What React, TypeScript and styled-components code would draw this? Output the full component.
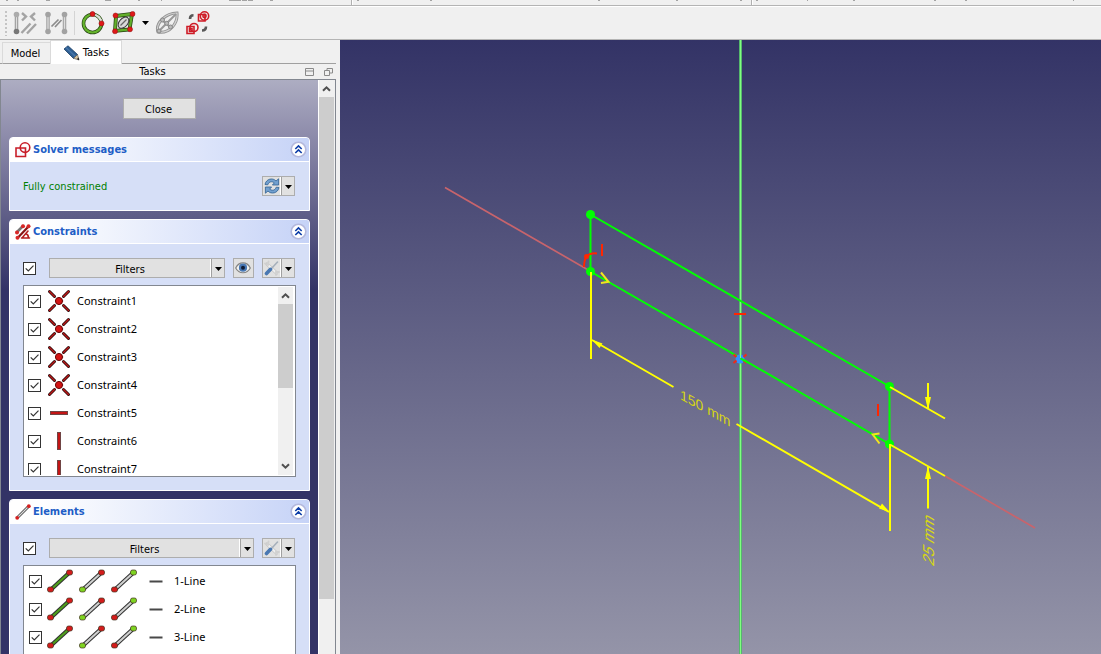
import React from 'react';
import styled, { createGlobalStyle } from 'styled-components';

const GlobalStyle = createGlobalStyle`
  *, *::before, *::after { box-sizing: border-box; }
  body { margin: 0; background: #f0f0f0; }
  body, button, input { font-family: "DejaVu Sans Condensed", "Noto Sans", sans-serif; font-size: 11px; line-height: 14px; color: #000; }
  svg { display: block; flex: none; }
`;

const Window = styled.div`
  display: flex;
  flex-direction: column;
  height: 100vh;
  overflow: hidden;
  background: #f0f0f0;
`;

const UpperBar = styled.div`
  height: 6px;
  flex: none;
  overflow: hidden;
  border-bottom: 1px solid #b4b4b4;
`;

const Toolbar = styled.div`
  display: flex;
  align-items: center;
  flex: none;
  height: 34px;
  padding-left: 5px;
  border-top: 1px solid #fff;
  border-bottom: 1px solid #b4b4b4;
`;

const Handle = styled.span`
  width: 2px;
  height: 25px;
  margin-right: 5px;
  background: repeating-linear-gradient(to bottom, #c4c4c4 0 2px, transparent 2px 4px);
`;

const ToolButton = styled.button`
  display: flex;
  align-items: center;
  justify-content: center;
  width: 26px;
  height: 26px;
  margin-right: 5px;
  padding: 0;
  border: 0;
  background: transparent;
`;

const MenuArrowButton = styled(ToolButton)`
  width: 12px;
  margin: 0 3px 0 -3px;
`;

const Separator = styled.span`
  width: 1px;
  height: 24px;
  margin-right: 5px;
  background: #d4d4d4;
`;

const Main = styled.main`
  display: flex;
  flex: 1;
  min-height: 0;
`;

const Dock = styled.aside`
  display: flex;
  flex-direction: column;
  flex: none;
  width: 336px;
  margin-right: 4px;
`;

const Tabs = styled.div`
  display: flex;
  align-items: flex-end;
  flex: none;
  height: 24px;
  padding-left: 2px;
  background: linear-gradient(#a0a0a0, #a0a0a0) bottom / 100% 1px no-repeat;
`;

const Tab = styled.button<{ $active?: boolean }>`
  display: flex;
  align-items: center;
  justify-content: center;
  gap: 3px;
  width: ${p => (p.$active ? 72 : 48)}px;
  height: ${p => (p.$active ? 24 : 22)}px;
  padding: ${p => (p.$active ? '1px 0 0' : '2px 2px 0 0')};
  border: 1px solid #dadada;
  border-bottom: ${p => (p.$active ? '0' : '1px solid #a0a0a0')};
  border-right-width: ${p => (p.$active ? 1 : 0)}px;
  background: ${p => (p.$active ? '#fff' : '#f0f0f0')};
`;

const DockTitle = styled.div`
  display: grid;
  grid-template-columns: 1fr auto auto;
  align-items: center;
  gap: 10px;
  flex: none;
  height: 15px;
  padding-right: 3px;
`;

const DockName = styled.span`
  padding: 1px 0 0 10px;
  text-align: center;
`;

const TitleButton = styled.button`
  padding: 0;
  border: 0;
  background: transparent;
`;

const ScrollArea = styled.div`
  display: flex;
  flex: 1;
  min-height: 0;
  overflow: hidden;
  border: 1px solid #828790;
  border-bottom: 0;
`;

const TaskPanel = styled.div`
  display: flex;
  flex-direction: column;
  gap: 8px;
  flex: 1;
  padding: 18px 8px 0;
  background: linear-gradient(#adadc2 0, #8b89a9 60px, #333366 210px);
`;

const CloseButton = styled.button`
  align-self: center;
  flex: none;
  width: 73px;
  height: 21px;
  margin-bottom: 10px;
  padding: 2px 2px 0 0;
  border: 1px solid #adadad;
  background: #e1e1e1;
`;

const TaskBox = styled.section`
  flex: none;
  border: 1px solid #fff;
  border-radius: 4px 4px 0 0;
  background: #d6dff7;
  overflow: hidden;
`;

const TaskHeader = styled.header`
  display: flex;
  align-items: center;
  gap: 2px;
  height: 24px;
  padding: 0 2px 0 5px;
  border-bottom: 1px solid #fff;
  background: linear-gradient(to right, #fff 10%, #c6d3f7);
`;

const TaskTitle = styled.h2`
  flex: 1;
  margin: 0;
  padding-top: 1px;
  font-size: 11px;
  line-height: 14px;
  font-weight: bold;
  color: #215dc6;
`;

const FoldButton = styled.button`
  width: 17px;
  height: 17px;
  padding: 0;
  border: 0;
  background: transparent;
`;

const TaskBody = styled.div<{ $bottom?: number }>`
  padding: 14px 13px ${p => p.$bottom ?? 13}px;
`;

const ControlRow = styled.div`
  display: flex;
  align-items: center;
  gap: 8px;
  height: 20px;
  padding-right: 1px;
`;

const Status = styled.p`
  flex: 1;
  margin: 0;
  padding-top: 2px;
  color: #008000;
`;

const CheckCell = styled.span<{ $gap?: number }>`
  display: grid;
  flex: none;
  width: 13px;
  height: 13px;
  margin-right: ${p => p.$gap ?? 0}px;
  > * { grid-area: 1 / 1; pointer-events: none; }
`;

const CheckInput = styled.input`
  appearance: none;
  width: 13px;
  height: 13px;
  margin: 0;
  border: 1px solid #333;
  background: #fff;
  && { pointer-events: auto; }
  &:not(:checked) + svg { visibility: hidden; }
`;

const SplitBox = styled.span<{ $grow?: boolean }>`
  display: flex;
  flex: ${p => (p.$grow ? '1' : 'none')};
  height: 20px;
  border: 1px solid #adadad;
  background: #e1e1e1;
`;

const SplitMain = styled.button<{ $text?: boolean }>`
  display: flex;
  align-items: center;
  justify-content: center;
  flex: 1;
  min-width: 18px;
  padding: ${p => (p.$text ? '3px 0 0' : '0')};
  border: 0;
  border-right: 1px solid #fff;
  background: transparent;
`;

const SplitArrow = styled.button`
  display: flex;
  align-items: center;
  justify-content: center;
  width: 13px;
  padding: 2px 0 0;
  border: 0;
  border-left: 1px solid #a0a0a0;
  background: transparent;
`;

const IconButton = styled.button`
  display: flex;
  align-items: center;
  justify-content: center;
  width: 21px;
  height: 20px;
  padding: 0 1px 0 0;
  border: 1px solid #adadad;
  background: #e1e1e1;
`;

const ListFrame = styled.div`
  display: flex;
  height: 192px;
  margin-top: 7px;
  padding: 1px;
  border: 1px solid #828790;
  background: #fff;
`;

const List = styled.ul<{ $indent: number }>`
  flex: 1;
  margin: 0;
  padding: 0 0 0 ${p => p.$indent}px;
  overflow: hidden;
  list-style: none;
`;

const ListRow = styled.li`
  height: 28px;
`;

const RowLabel = styled.label`
  display: flex;
  align-items: center;
  height: 28px;
  font-family: "Noto Sans", "Open Sans", sans-serif;
  font-size: 11px;
  line-height: 14px;
`;

const IconSet = styled.span<{ $gap: number }>`
  display: flex;
  align-items: center;
  gap: 6px;
  margin-right: ${p => p.$gap}px;
`;

const ScrollTrack = styled.div<{ $outer?: boolean }>`
  display: flex;
  flex-direction: column;
  flex: none;
  width: ${p => (p.$outer ? 17 : 16)}px;
  border-left: ${p => (p.$outer ? '1px solid #fff' : '0')};
  border-right: 1px solid ${p => (p.$outer ? '#f0f0f0' : '#fff')};
  background: #f0f0f0;
`;

const ScrollStep = styled.button`
  display: flex;
  align-items: center;
  justify-content: center;
  flex: none;
  width: 15px;
  height: 17px;
  padding: 0;
  border: 0;
  background: transparent;
`;

const ScrollThumb = styled.div<{ $share: number }>`
  flex: ${p => p.$share} 1 0;
  background: #cdcdcd;
`;

const ScrollRest = styled.div<{ $share: number }>`
  flex: ${p => p.$share} 1 0;
`;

const Viewport = styled.div`
  flex: 1;
  min-width: 0;
  background: linear-gradient(#333366, #9494a8);
  > svg { width: 100%; height: 100%; }
`;

const DownTriangle = () => (
  <svg width="7" height="4" viewBox="0 0 7 4"><path d="M0 0H7L3.5 4Z" fill="#000" /></svg>
);

const Chevron = ({ down }: { down?: boolean }) => (
  <svg width="9" height="7" viewBox="0 0 9 7">
    <path d={down ? 'M1 1.2L4.5 4.7L8 1.2' : 'M1 5.8L4.5 2.3L8 5.8'} fill="none" stroke="#505050" strokeWidth="2" />
  </svg>
);

const Check = ({ label, gap }: { label?: string; gap?: number }) => (
  <CheckCell $gap={gap}>
    <CheckInput type="checkbox" defaultChecked aria-label={label} />
    <svg width="13" height="13" viewBox="0 0 13 13">
      <path d="M2.7 6.3L5.3 9L10.5 3.6" fill="none" stroke="#333" strokeWidth="1.2" />
    </svg>
  </CheckCell>
);

const Fold = ({ name }: { name: string }) => (
  <FoldButton aria-label={`Collapse ${name}`}>
    <svg width="17" height="17" viewBox="0 0 17 17">
      <circle cx="8.5" cy="8.5" r="7.3" fill="#fff" stroke="#b3b8dc" strokeWidth="1.6" />
      <path d="M5.3 8L8.5 4.9L11.7 8M5.3 12L8.5 8.9L11.7 12" fill="none" stroke="#0d3ea8" strokeWidth="1.6" />
    </svg>
  </FoldButton>
);

const SketchIcon = () => (
  <svg width="16" height="16" viewBox="0 0 16 16" fill="none" stroke="#c81e28" strokeWidth="1.6">
    <path d="M1 6H10.5V14.5H1Z" fill="#f8f8ff" /><circle cx="10" cy="5.6" r="4.8" />
  </svg>
);

const ConstraintsIcon = () => (
  <svg width="16" height="16" viewBox="0 0 16 16" fill="none" strokeLinecap="round">
    <path d="M2 8L8 2" stroke="#777" strokeWidth="2.6" />
    <path d="M3 13.5L14 2" stroke="#881414" strokeWidth="2.2" />
    <path d="M6.5 14H14.5M7 14L13 7M11 9.5C13 10.5 13.5 12 13.5 14" stroke="#b51c1c" strokeWidth="1.6" />
    <g fill="#d82828"><circle cx="2" cy="8.5" r="2" /><circle cx="8" cy="2.3" r="2" /><circle cx="2.5" cy="13.8" r="2" /><circle cx="13.5" cy="2.3" r="2" /></g>
  </svg>
);

const LineIcon = () => (
  <svg width="16" height="16" viewBox="0 0 16 16">
    <path d="M2.5 13.5L13.5 2.5" stroke="#444" strokeWidth="2.8" /><path d="M2.5 13.5L13.5 2.5" stroke="#ddd" strokeWidth="1.2" />
    <circle cx="2.2" cy="13.8" r="1.9" fill="#d42020" /><circle cx="13.8" cy="2.2" r="1.9" fill="#d42020" />
  </svg>
);

const RefreshIcon = () => (
  <svg width="16" height="16" viewBox="0 0 16 16" strokeLinejoin="round">
    <g fill="#72a0cf" stroke="#2f5f92" strokeWidth="0.8">
      <path d="M1 6.5C2 .6 9 -.6 12 3L14.6 .8V7H8.4L10.3 4.9C8 3 5 3.4 3.8 6.8Z" />
      <path d="M15 9.5C14 15.4 7 16.6 4 13L1.4 15.2V9H7.6L5.7 11.1C8 13 11 12.6 12.2 9.2Z" />
    </g>
  </svg>
);

const EyeIcon = () => (
  <svg width="16" height="14" viewBox="0 0 16 14">
    <path d="M.7 7C4 .2 12 .2 15.3 7C12 13.3 4 13.3 .7 7Z" fill="#f4f4f0" stroke="#848484" strokeWidth="1.2" />
    <circle cx="8" cy="6.7" r="4.1" fill="#4878b4" /><circle cx="8" cy="6.7" r="2" fill="#101c34" />
  </svg>
);

const ToolsIcon = () => (
  <svg width="16" height="16" viewBox="0 0 16 16" strokeLinecap="round">
    <path d="M3 4L12.5 13" stroke="#c4c4c4" strokeWidth="3.4" />
    <path d="M3.5 4.5L12.5 13" stroke="#f0f0f0" strokeWidth="2" />
    <path d="M1 3.5L4 5L4.5 1.5M15 12L12 12L12 15" fill="none" stroke="#d0d0d0" strokeWidth="1.8" />
    <path d="M7 9L13.5 2" stroke="#a6b0bb" strokeWidth="1.6" />
    <path d="M2.5 13.5L6.5 9.3" stroke="#4a78b2" strokeWidth="3.6" />
  </svg>
);

const Coincident = () => (
  <svg width="24" height="24" viewBox="0 0 24 24" strokeLinecap="round">
    {['M2.5 2.5L7.5 7.5', 'M21.5 2.5L16.5 7.5', 'M2.5 21.5L7.5 16.5', 'M21.5 21.5L16.5 16.5'].map(d => (
      <g key={d}><path d={d} stroke="#280909" strokeWidth="3" /><path d={d} stroke="#bd1919" strokeWidth="1.4" /></g>
    ))}
    <circle cx="12" cy="12" r="3.6" fill="#d41414" stroke="#680808" strokeWidth="1" />
  </svg>
);

const BarIcon = ({ vertical }: { vertical?: boolean }) => (
  <svg width="24" height="24" viewBox="0 0 24 24">
    <g transform={vertical ? 'rotate(90 12 12)' : undefined}>
      <rect x="3" y="10" width="18" height="4" fill="#704444" /><rect x="4" y="11" width="16" height="2" fill="#c41515" />
    </g>
  </svg>
);

const Segment = ({ start, mid, end }: { start: string; mid: string; end: string }) => (
  <svg width="26" height="24" viewBox="0 0 26 24">
    <path d="M4 20.5L22 4" stroke="#303030" strokeWidth="4.2" /><path d="M4 20.5L22 4" stroke={mid} strokeWidth="2.2" />
    <rect x=".5" y="18" width="6" height="5" rx="2" fill={start} stroke="#40301c" strokeWidth=".7" />
    <rect x="19.5" y="1" width="6" height="5" rx="2" fill={end} stroke="#40301c" strokeWidth=".7" />
  </svg>
);

const DashIcon = () => (
  <svg width="14" height="24" viewBox="0 0 14 24"><rect x=".5" y="11.5" width="13" height="2" fill="#484848" /></svg>
);

const PencilIcon = () => (
  <svg width="17" height="17" viewBox="0 0 17 17">
    <path d="M1 4L5 .8L14.5 9.5L10.5 13.5Z" fill="#2e5f93" stroke="#1a3d63" strokeWidth=".8" />
    <path d="M3 2.5L12.5 11.5" stroke="#4a78ab" strokeWidth="1.2" />
    <path d="M10.5 13.3L14.5 9.5L16 15Z" fill="#d9c5a0" stroke="#444" strokeWidth=".6" /><path d="M14 14L15.5 12.5L16.2 15.2Z" fill="#111" />
  </svg>
);

const SnapIcon = () => (
  <svg width="24" height="24" viewBox="0 0 24 24" fill="none">
    <path d="M3.5 3V21" stroke="#999" strokeWidth="3.5" /><path d="M3.5 3V21" stroke="#ddd" strokeWidth="1.3" />
    <circle cx="3.5" cy="3.5" r="2.8" fill="#ababab" /><circle cx="3.5" cy="20.5" r="2.8" fill="#777" />
    <path d="M9 2L13 5.5L9 9.5M22 2L18 5.5L22 9.5M8.5 22L17.5 12.5M14 22.5L23 13" stroke="#a4a4a4" strokeWidth="2.4" />
  </svg>
);

const MirrorIcon = () => (
  <svg width="24" height="24" viewBox="0 0 24 24">
    <path d="M4 3V21M20.5 3V21" stroke="#a1a1a1" strokeWidth="3.5" /><path d="M4 3V21M20.5 3V21" stroke="#ddd" strokeWidth="1.3" />
    <g fill="#a2a2a2"><circle cx="4" cy="3.5" r="2.8" /><circle cx="4" cy="20.5" r="2.8" /><circle cx="20.5" cy="3.5" r="2.8" /><circle cx="20.5" cy="20.5" r="2.8" /></g>
    <path d="M7.5 15.5L14.5 8.5M11 16L17.5 9" stroke="#8c8c8c" strokeWidth="1.7" />
  </svg>
);

const CircleIcon = () => (
  <svg width="24" height="24" viewBox="0 0 24 24" fill="none">
    <circle cx="11.5" cy="12.5" r="9" stroke="#2a4a16" strokeWidth="3.6" /><circle cx="11.5" cy="12.5" r="9" stroke="#65b42c" strokeWidth="2.2" />
    <path d="M11.5 3.5A9 9 0 0 1 20.5 12.5" stroke="#ddd" strokeWidth="2.2" />
    <circle cx="11.5" cy="3" r="2.5" fill="#e01818" stroke="#901010" strokeWidth=".6" /><circle cx="20.5" cy="12.4" r="2.5" fill="#e01818" stroke="#901010" strokeWidth=".6" />
  </svg>
);

const PolygonIcon = () => (
  <svg width="24" height="24" viewBox="0 0 24 24" fill="none">
    <path d="M4 5L20 3L17.500 18.500L3 20Z" stroke="#23400f" strokeWidth="3.8" /><path d="M4 5L20 3L17.500 18.500L3 20Z" stroke="#62ae2b" strokeWidth="2.400" />
    <ellipse cx="11.500" cy="11.700" rx="6.500" ry="4.200" transform="rotate(-48 11.500 11.700)" fill="#d8d8d8" stroke="#333" strokeWidth="1" />
    <path d="M8.500 14.500L14.500 8.500" stroke="#666" strokeWidth="1.200" />
    <g fill="#df1919" stroke="#901010" strokeWidth=".5"><circle cx="3.500" cy="4.500" r="2.500" /><circle cx="20.500" cy="2.900" r="2.500" /><circle cx="18" cy="18.300" r="2.500" /><circle cx="3" cy="20.300" r="2.500" /></g>
  </svg>
);

const EllipseIcon = () => (
  <svg width="24" height="24" viewBox="0 0 24 24" fill="none">
    <path d="M3 21C0 12 11 2 22 2C23 12 15 23 3 21Z" stroke="#949494" strokeWidth="3" /><path d="M3 21C0 12 11 2 22 2C23 12 15 23 3 21Z" stroke="#d4d4d4" strokeWidth="1.2" />
    <path d="M4 20L21 3M7 9L15 16" stroke="#999" strokeWidth="2" />
    <g fill="#bbb" stroke="#888" strokeWidth="1"><circle cx="7.5" cy="9" r="2" /><circle cx="15.5" cy="16" r="2" /><circle cx="11.7" cy="12.3" r="2" /><circle cx="4" cy="20" r="2" /></g>
  </svg>
);

const CloneIcon = () => (
  <svg width="26" height="24" viewBox="0 0 26 24" fill="none">
    <path d="M5 8C5 5.500 6 4.300 8.500 4.300M21 15.500C21 18 19.500 19.500 17 19.500" stroke="#585858" strokeWidth="2.600" />
    <g stroke="#cf1c27" strokeWidth="1.6"><path d="M13.500 3.500H20V10H13.500Z" /><circle cx="19.500" cy="5" r="4.200" /><circle cx="19.500" cy="5" r="1.600" /><path d="M2 15.500H9V22.500H2Z" /><path d="M4.500 17.500H7V20.500H4.500Z" /><circle cx="9" cy="16.500" r="4" /></g>
  </svg>
);

const Split = ({ name, text, children }: { name: string; text?: boolean; children: React.ReactNode }) => (
  <SplitBox $grow={text}>
    <SplitMain $text={text} aria-label={name}>{children}</SplitMain>
    <SplitArrow aria-label={`${name} menu`}><DownTriangle /></SplitArrow>
  </SplitBox>
);

const Task = ({ title, icon, bottom, children }: { title: string; icon: React.ReactNode; bottom?: number; children: React.ReactNode }) => (
  <TaskBox>
    <TaskHeader>{icon}<TaskTitle>{title}</TaskTitle><Fold name={title} /></TaskHeader>
    <TaskBody $bottom={bottom}>{children}</TaskBody>
  </TaskBox>
);

const constraints = ['point', 'point', 'point', 'point', 'horizontal', 'vertical', 'vertical'];
const elements = ['1-Line', '2-Line', '3-Line'];
const RED = '#d31c1c';
const LIME = '#7ed321';
const GREY = '#cfd0cf';

const upperMarks = [
  [6, 2], [17, 2], [46, 4], [105, 6], [138, 2], [161, 1], [229, 12], [242, 5], [248, 5], [270, 3], [357, 2], [430, 2],
  [598, 2], [676, 2], [740, 2], [756, 2], [807, 1], [853, 2], [934, 2], [965, 2], [1073, 1],
];

const Scene = () => (
  <svg viewBox="340 40 761 614" preserveAspectRatio="xMidYMid slice" fill="none" role="img" aria-label="Sketch">
    <path d="M740.5 0V700" stroke="#55b86c" strokeWidth="3" />
    <path d="M740.5 0V700" stroke="#80ff80" strokeWidth="1" />
    <path d="M445 187.5L590 271M945 476L1035 528" stroke="#c8646c" strokeWidth="1.7" />
    <path d="M590.5 214.5L889.5 386.5V444L590.5 271.5Z" stroke="#00ff00" strokeWidth="2" />
    <g fill="#00ff00"><circle cx="590.5" cy="214.5" r="4.5" /><circle cx="590.5" cy="271.5" r="4.5" /><circle cx="889.5" cy="386.5" r="4.5" /><circle cx="889.5" cy="444" r="4.5" /></g>
    <g stroke="#ffff00" strokeWidth="2">
      <path d="M591 272V359M890 444V531" />
      <path d="M592 340L673.5 387M736.5 424L889 512" />
      <path d="M890 387L945 418.5M890 444.5L945 476" />
      <path d="M928 383V408M928 467V508.5" />
      <path d="M601 272.5L608.5 281.8L601 283M879.5 443.5L872.7 434.5L879.5 433.5" stroke="#f3e61c" />
    </g>
    <g fill="#ffff00">
      <path d="M591.5 339.5L602.5 343.5L599.5 348Z" /><path d="M889.5 512L882 503.5L879 508.5Z" />
      <path d="M928 410L925 397H931Z" /><path d="M928 466L925 479H931Z" />
    </g>
    <g stroke="#ff2600" strokeWidth="2">
      <path d="M602 244V256M878 404V416M734 314H746" />
      <path d="M597 253.5C588 252.5 584 257 584 267" /><circle cx="586.5" cy="256.5" r="1.5" />
    </g>
    <circle cx="740" cy="359" r="4.5" fill="#3291ff" />
    <path d="M733.5 354.5L736.5 357M746.5 354.5L743.5 357M733.5 363L736.5 360.5M746.5 363L743.5 360.5" stroke="#f02a18" strokeWidth="2.2" />
    <path d="M740.5 358.3L748 362.6" stroke="#00ff00" strokeWidth="2" />
    <path d="M740.5 350V358" stroke="#80ff80" strokeWidth="1" />
    <g fill="#d6d614" fontFamily="'Liberation Sans', sans-serif">
      <text transform="translate(680 399) skewY(29)" fontSize="14">150 mm</text>
      <text transform="matrix(0 -1 1 .58 934 567)" fontSize="16">25 mm</text>
    </g>
  </svg>
);

export default function App() {
  return (
    <>
      <GlobalStyle />
      <Window>
        <UpperBar>
          <svg width="1101" height="5" viewBox="0 0 1101 5">
            {upperMarks.map(([x, w]) => <rect key={x} x={x} y="0" width={w} height="1" fill="#a3a3a3" />)}
            <path d="M351.5 0V5M751.5 0V5" stroke="#b0b0b0" />
            <path d="M352.5 0V5M752.5 0V5" stroke="#fff" />
          </svg>
        </UpperBar>
        <Toolbar role="toolbar">
          <Handle />
          <ToolButton aria-label="Close shape"><SnapIcon /></ToolButton>
          <ToolButton aria-label="Connect edges"><MirrorIcon /></ToolButton>
          <Separator />
          <ToolButton aria-label="Select constraints"><CircleIcon /></ToolButton>
          <ToolButton aria-label="Select elements"><PolygonIcon /></ToolButton>
          <MenuArrowButton aria-label="More selection tools"><DownTriangle /></MenuArrowButton>
          <ToolButton aria-label="Internal geometry"><EllipseIcon /></ToolButton>
          <ToolButton aria-label="Clone"><CloneIcon /></ToolButton>
        </Toolbar>
        <Main>
          <Dock>
            <Tabs role="tablist">
              <Tab role="tab" aria-selected={false}>Model</Tab>
              <Tab role="tab" aria-selected $active><PencilIcon />Tasks</Tab>
            </Tabs>
            <DockTitle>
              <DockName>Tasks</DockName>
              <TitleButton aria-label="Dock">
                <svg width="9" height="9" viewBox="0 0 9 9" fill="none" stroke="#8a8a8a"><path d="M.5 1.5H8.5V8.5H.5ZM.5 4H8.5" /></svg>
              </TitleButton>
              <TitleButton aria-label="Float">
                <svg width="9" height="9" viewBox="0 0 9 9" fill="none" stroke="#8a8a8a"><path d="M.5 3.5H5.5V8.5H.5ZM3 3.5V1.5H8.5V6H5.5" /></svg>
              </TitleButton>
            </DockTitle>
            <ScrollArea>
              <TaskPanel>
                <CloseButton>Close</CloseButton>
                <Task title="Solver messages" icon={<SketchIcon />} bottom={14}>
                  <ControlRow>
                    <Status>Fully constrained</Status>
                    <Split name="Update"><RefreshIcon /></Split>
                  </ControlRow>
                </Task>
                <Task title="Constraints" icon={<ConstraintsIcon />}>
                  <ControlRow>
                    <Check label="Filter constraints" gap={5} />
                    <Split name="Filters" text>Filters</Split>
                    <IconButton aria-label="Show constraints"><EyeIcon /></IconButton>
                    <Split name="Settings"><ToolsIcon /></Split>
                  </ControlRow>
                  <ListFrame>
                    <List $indent={3}>
                      {constraints.map((kind, i) => (
                        <ListRow key={i}>
                          <RowLabel>
                            <Check gap={6} />
                            <IconSet $gap={6}>{kind === 'point' ? <Coincident /> : <BarIcon vertical={kind === 'vertical'} />}</IconSet>
                            {`Constraint${i + 1}`}
                          </RowLabel>
                        </ListRow>
                      ))}
                    </List>
                    <ScrollTrack>
                      <ScrollStep aria-label="Scroll up"><Chevron /></ScrollStep>
                      <ScrollThumb $share={84} />
                      <ScrollRest $share={70} />
                      <ScrollStep aria-label="Scroll down"><Chevron down /></ScrollStep>
                    </ScrollTrack>
                  </ListFrame>
                </Task>
                <Task title="Elements" icon={<LineIcon />}>
                  <ControlRow>
                    <Check label="Filter elements" gap={5} />
                    <Split name="Filters" text>Filters</Split>
                    <Split name="Settings"><ToolsIcon /></Split>
                  </ControlRow>
                  <ListFrame>
                    <List $indent={4}>
                      {elements.map(name => (
                        <ListRow key={name}>
                          <RowLabel>
                            <Check gap={5} />
                            <IconSet $gap={12}>
                              <Segment start={RED} mid="#4f9e1c" end={RED} />
                              <Segment start={LIME} mid={GREY} end={RED} />
                              <Segment start={RED} mid={GREY} end={LIME} />
                            </IconSet>
                            <IconSet $gap={11}><DashIcon /></IconSet>
                            {name}
                          </RowLabel>
                        </ListRow>
                      ))}
                    </List>
                  </ListFrame>
                </Task>
              </TaskPanel>
              <ScrollTrack $outer>
                <ScrollStep aria-label="Scroll up"><Chevron /></ScrollStep>
                <ScrollThumb $share={502} />
                <ScrollRest $share={55} />
              </ScrollTrack>
            </ScrollArea>
          </Dock>
          <Viewport><Scene /></Viewport>
        </Main>
      </Window>
    </>
  );
}
